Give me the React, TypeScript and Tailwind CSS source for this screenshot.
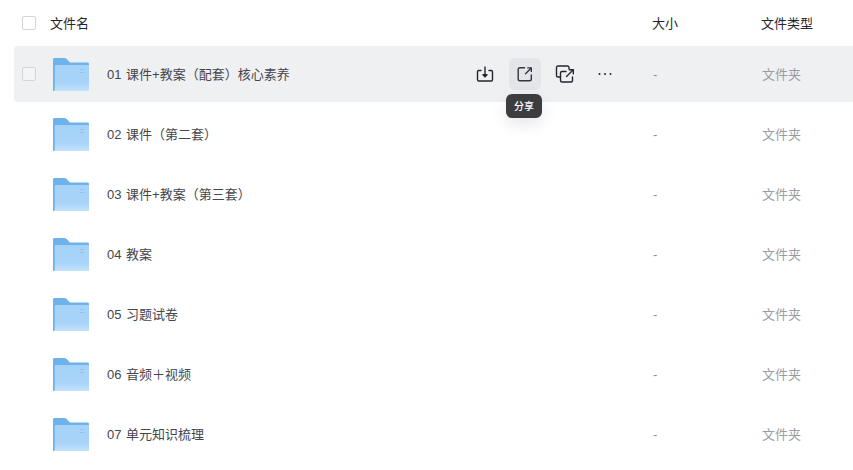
import React from "react";

const font = { fontFamily: '"Liberation Sans", "Noto Sans CJK SC", sans-serif' };

const rows = [
  "01 课件+教案（配套）核心素养",
  "02 课件（第二套）",
  "03 课件+教案（第三套）",
  "04 教案",
  "05 习题试卷",
  "06 音频＋视频",
  "07 单元知识梳理",
];

function Folder() {
  return (
    <svg width="36" height="33" viewBox="0 0 36 33" className="shrink-0 block mt-[1px]">
      <defs>
        <linearGradient id="fb" x1="0" y1="0" x2="0" y2="1">
          <stop offset="0" stopColor="#a5d2f8" />
          <stop offset="0.7" stopColor="#a9d4fa" />
          <stop offset="1" stopColor="#c4e2fb" />
        </linearGradient>
      </defs>
      <path d="M0 1.5C0 .7.7 0 1.5 0H11.5C12.3 0 13 .4 13.6 1L17 4.5H34.5C35.4 4.5 36 5.1 36 6V32H0Z" fill="#6db2ea" />
      <path d="M1.5 33 V9 C1.5 7.6 2.1 7 3.5 7 H36 V33Z" fill="url(#fb)" />
      <rect x="0" y="8" width="1.5" height="25" fill="#6db2ea" />
      <rect x="27" y="11" width="4" height="1" fill="#8fc3ef" />
      <rect x="27" y="14" width="4" height="1" fill="#8fc3ef" />
    </svg>
  );
}

function Check({ clear }: { clear?: boolean }) {
  return (
    <span
      className={
        "block w-[14px] h-[14px] rounded-[2px] border border-[#d4d5d8] shrink-0 " +
        (clear ? "bg-[#f3f4f5]" : "bg-white")
      }
    />
  );
}

function DownloadIcon() {
  return (
    <svg width="20" height="20" viewBox="0 0 20 20" fill="none" stroke="#23262e" strokeWidth="1.4" strokeLinecap="round" strokeLinejoin="round">
      <path d="M6 6.5H3.8C3 6.5 2.5 7 2.5 7.8V15.7C2.5 16.5 3 17 3.8 17H16.2C17 17 17.5 16.5 17.5 15.7V7.8C17.5 7 17 6.5 16.2 6.5H14" />
      <path d="M10 3V12.5" />
      <path d="M8 10.8L10 12.8L12 10.8Z" fill="#23262e" />
    </svg>
  );
}

function ShareIcon() {
  return (
    <svg width="20" height="20" viewBox="0 0 20 20" fill="none" stroke="#33363e" strokeWidth="1.4" strokeLinecap="round" strokeLinejoin="round">
      <path d="M9.5 3.7H5C3.9 3.7 3.2 4.4 3.2 5.5V15C3.2 16.1 3.9 16.8 5 16.8H14.5C15.6 16.8 16.3 16.1 16.3 15V11" />
      <path d="M10.5 9.8L16 4.2" />
      <path d="M12.8 3.9H16.3V7.4" />
    </svg>
  );
}

function CopyLinkIcon() {
  return (
    <svg width="20" height="20" viewBox="0 0 20 20" fill="none" stroke="#23262e" strokeWidth="1.4" strokeLinecap="round" strokeLinejoin="round">
      <path d="M14 4.5V3.5C14 2.7 13.3 2 12.5 2H3C2.2 2 1.5 2.7 1.5 3.5V11.5C1.5 12.3 2.2 13 3 13H5.5" />
      <path d="M11 7.5H7C6.2 7.5 5.5 8.2 5.5 9V16.5C5.5 17.3 6.2 18 7 18H16C16.8 18 17.5 17.3 17.5 16.5V13" />
      <path d="M11.5 12.5L18 6" />
      <path d="M14.2 5.8H18.3V9.8" />
    </svg>
  );
}

function MoreIcon() {
  return (
    <svg width="20" height="20" viewBox="0 0 20 20" fill="#23262e">
      <circle cx="4.5" cy="10" r="1" />
      <circle cx="10" cy="10" r="1" />
      <circle cx="15.5" cy="10" r="1" />
    </svg>
  );
}

function Actions() {
  return (
    <div className="flex items-center gap-2 mr-[31px]">
      <span className="w-8 h-8 flex items-center justify-center"><DownloadIcon /></span>
      <span className="relative w-8 h-8 flex items-center justify-center rounded-md bg-[#e3e5e8]">
        <ShareIcon />
        <span className="absolute top-9 left-[-3px] w-9 h-6 flex items-center justify-center rounded-md bg-[#3c3c3e] text-white text-[10px] font-medium shadow-[0_6px_16px_rgba(0,0,0,0.1)]">分享</span>
      </span>
      <span className="w-8 h-8 flex items-center justify-center"><CopyLinkIcon /></span>
      <span className="w-8 h-8 flex items-center justify-center"><MoreIcon /></span>
    </div>
  );
}

export default function App() {
  return (
    <div className="w-[853px] h-[470px] overflow-hidden bg-white pl-[14px]" style={font}>
      <div className="flex items-center h-[46px] text-[13px] text-[#25262b]">
        <div className="w-[638px] flex items-center pl-2">
          <Check />
          <span className="ml-[14px] pt-[2px]">文件名</span>
        </div>
        <span className="w-[109px] pt-[2px]">大小</span>
        <span className="pt-[2px]">文件类型</span>
      </div>
      <div className="flex flex-col gap-1">
        {rows.map((name, i) => (
          <div key={name} className={"flex items-center h-14 rounded-l-[4px] text-[13px] " + (i === 0 ? "bg-[#eff0f2]" : "")}>
            <div className="w-[638px] flex items-center pl-2">
              <span className="w-[14px] shrink-0">{i === 0 ? <Check clear /> : null}</span>
              <span className="ml-[17px]"><Folder /></span>
              <span className="ml-[18px] pt-[2px] text-[#44464d] flex-1 [word-spacing:1px]">{name}</span>
              {i === 0 ? <Actions /> : null}
            </div>
            <span className="w-[110px] pt-[2px] text-[#8d8f96] pl-[1px]">-</span>
            <span className="pt-[2px] text-[#9a9ca3]">文件夹</span>
          </div>
        ))}
      </div>
    </div>
  );
}
